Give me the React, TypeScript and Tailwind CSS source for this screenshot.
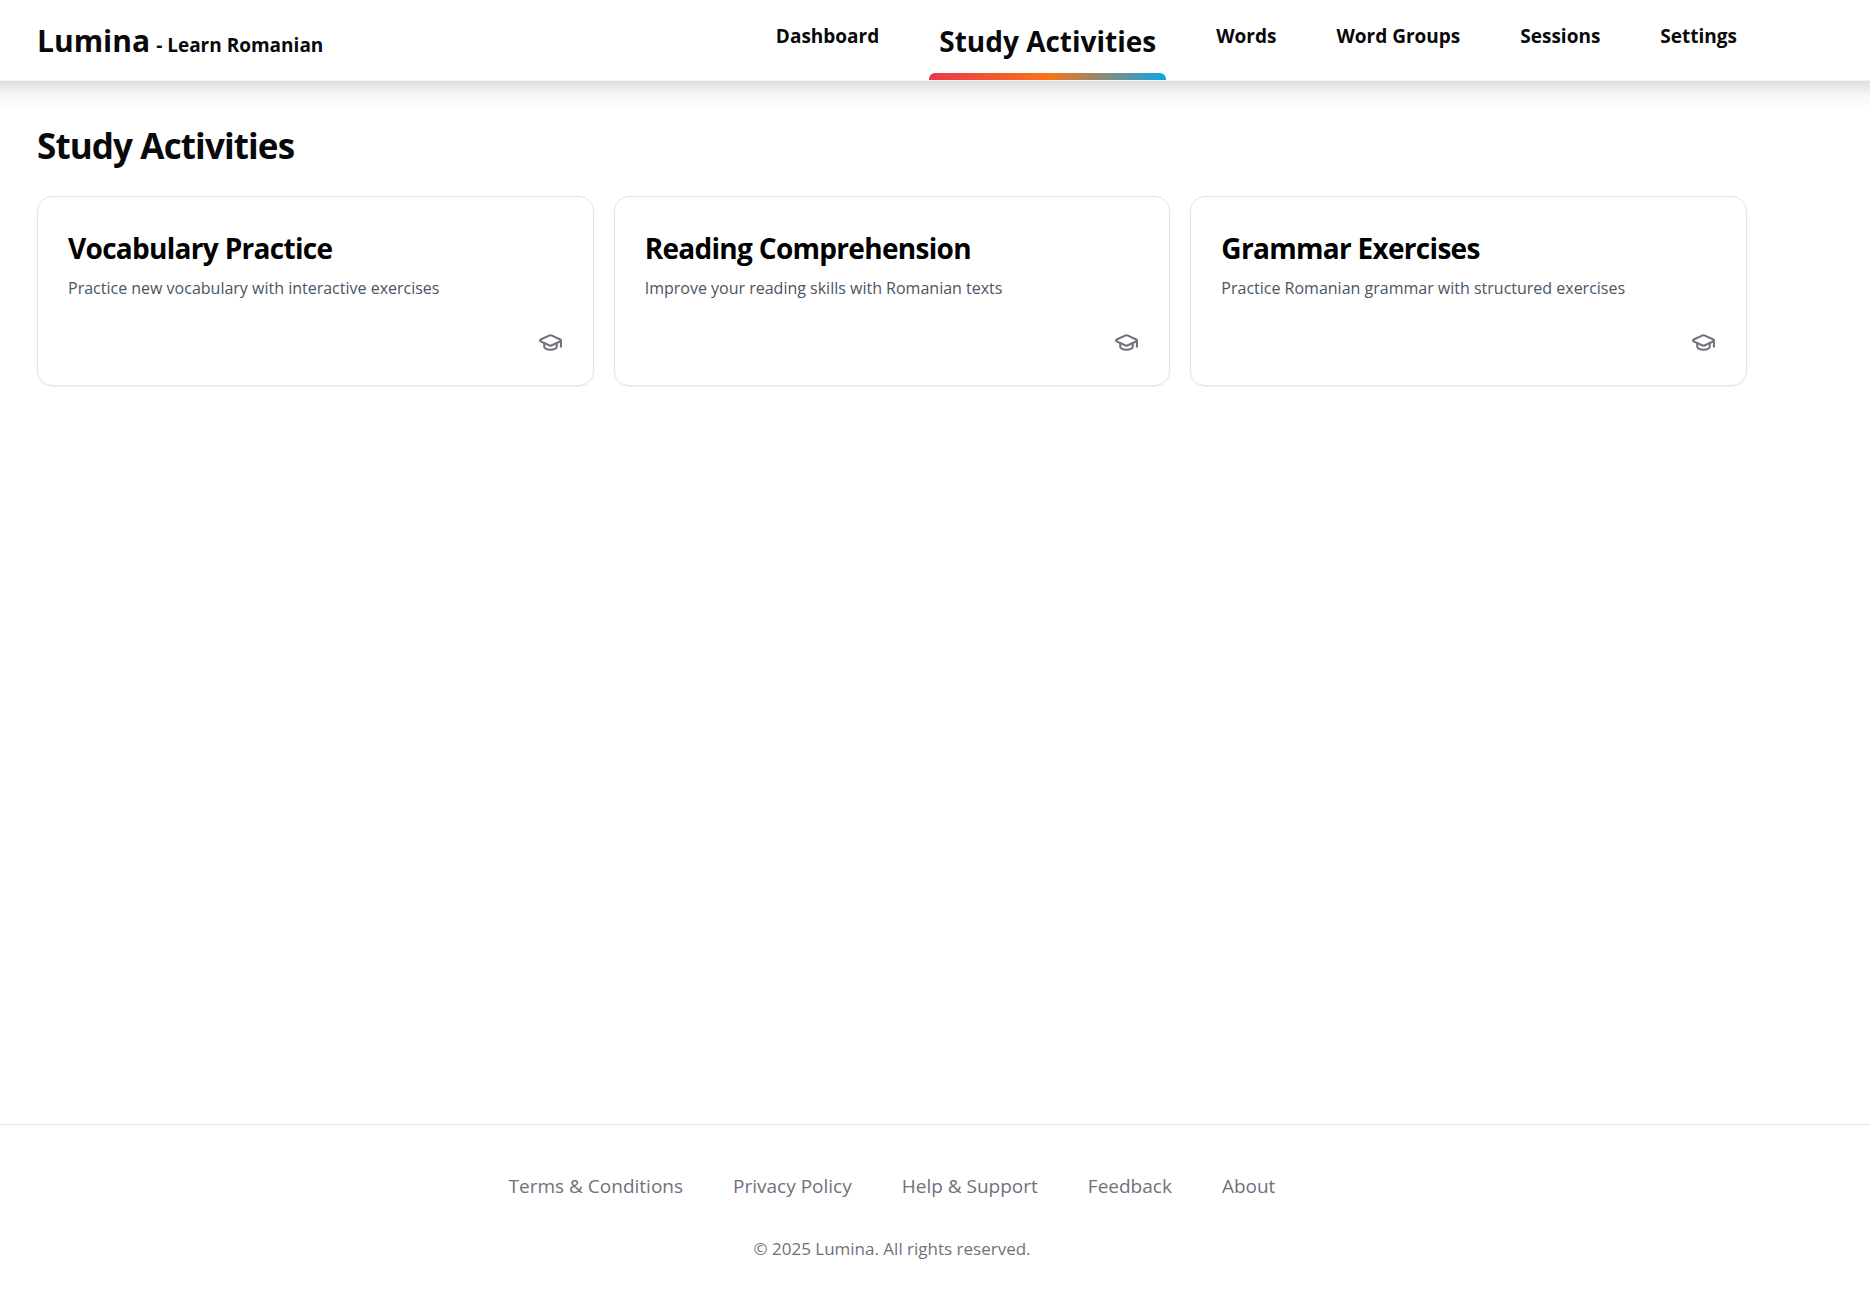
import { GraduationCap } from "lucide-react";

const navItems = ["Dashboard", "Study Activities", "Words", "Word Groups", "Sessions", "Settings"];

const activities = [
  { title: "Vocabulary Practice", description: "Practice new vocabulary with interactive exercises" },
  { title: "Reading Comprehension", description: "Improve your reading skills with Romanian texts" },
  { title: "Grammar Exercises", description: "Practice Romanian grammar with structured exercises" },
];

const footerLinks = ["Terms & Conditions", "Privacy Policy", "Help & Support", "Feedback", "About"];

function NavLink({ label, active }: { label: string; active: boolean }) {
  if (active) {
    return (
      <a href="#" aria-current="page" className="relative flex h-20 px-[10px] pt-5 text-[28px] leading-[42px]">
        {label}
        <span className="absolute inset-x-0 bottom-0 h-[7px] rounded-t-md bg-linear-to-r/srgb from-[#ea384c] via-[#f97316] to-[#0ea5e9]" />
      </a>
    );
  }
  return (
    <a href="#" className="px-[10px] pt-[22px] text-[19px] leading-7">
      {label}
    </a>
  );
}

function Header() {
  return (
    <header className="relative border-b border-zinc-100 bg-white">
      <div className="flex h-20 max-w-[1784px] items-start justify-between px-[37px] font-bold">
        <a href="#" className="flex items-baseline gap-1.5 pt-4 text-[30px] leading-[50px]">
          Lumina
          <span className="text-[19px]">- Learn Romanian</span>
        </a>
        <nav aria-label="Main" className="flex gap-10">
          {navItems.map((label) => (
            <NavLink key={label} label={label} active={label === "Study Activities"} />
          ))}
        </nav>
      </div>
      {/* Full-width drop shadow that keeps its strength at both window edges */}
      <div className="pointer-events-none absolute inset-x-0 top-[81px] h-[30px] bg-linear-to-b/srgb from-black/13 via-black/3 to-transparent" />
    </header>
  );
}

function ActivityCard({ title, description }: { title: string; description: string }) {
  return (
    <article className="flex flex-col rounded-[15px] border border-zinc-200 bg-white p-[30px] shadow-xs">
      <h2 className="text-[28px] leading-[42px] font-bold tracking-tight text-black">{title}</h2>
      <p className="mt-[5px] text-base leading-7 text-gray-600">{description}</p>
      <GraduationCap aria-hidden="true" className="mt-7 size-[25px] self-end text-zinc-500" />
    </article>
  );
}

function Footer() {
  return (
    <footer className="border-t border-zinc-200 text-zinc-500">
      <div className="flex max-w-[1784px] flex-col items-center gap-[34px] px-[37px] pt-[46px] pb-[35px]">
        <nav aria-label="Footer" className="flex gap-[50px] text-[19px] leading-[30px]">
          {footerLinks.map((label) => (
            <a key={label} href="#">
              {label}
            </a>
          ))}
        </nav>
        <p className="text-[17px] leading-7">© 2025 Lumina. All rights reserved.</p>
      </div>
    </footer>
  );
}

export default function App() {
  return (
    <div className="flex min-h-screen flex-col bg-white font-['Segoe_UI','Open_Sans',sans-serif] text-zinc-950">
      <Header />
      <main className="max-w-[1784px] grow px-[37px] pt-10">
        <h1 className="text-[35px] leading-[50px] font-bold tracking-tight">Study Activities</h1>
        <div className="mt-[25px] grid grid-cols-3 gap-5">
          {activities.map((activity) => (
            <ActivityCard key={activity.title} {...activity} />
          ))}
        </div>
      </main>
      <Footer />
    </div>
  );
}
